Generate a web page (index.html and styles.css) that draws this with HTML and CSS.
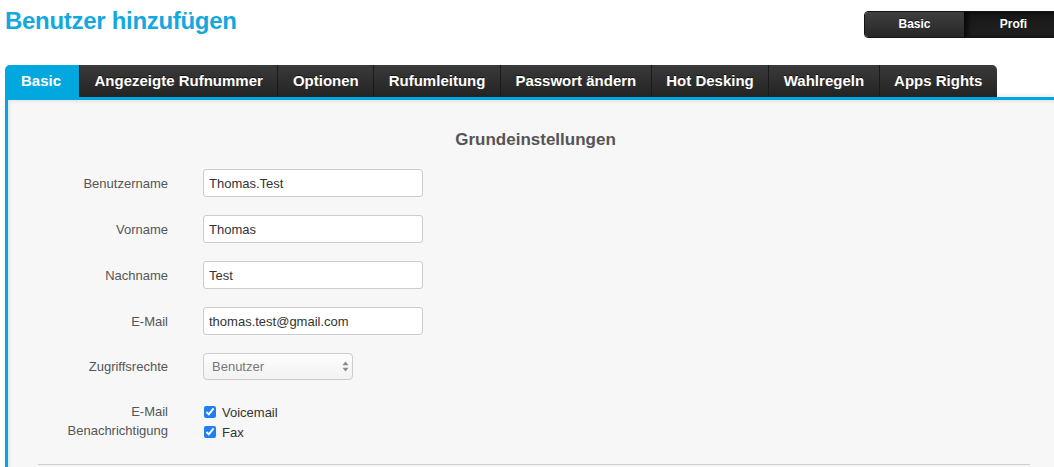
FILE: index.html
```html
<!DOCTYPE html>
<html lang="de">
<head>
<meta charset="utf-8">
<title>Benutzer hinzufügen</title>
<link rel="stylesheet" href="styles.css">
</head>
<body>
<div class="page">
  <header class="top">
    <h1 class="title">Benutzer hinzufügen</h1>
    <div class="mode">
      <span class="mode-btn">Basic</span>
      <span class="mode-btn active">Profi</span>
    </div>
  </header>
  <nav class="tabs">
    <a class="tab active">Basic</a>
    <a class="tab">Angezeigte Rufnummer</a>
    <a class="tab">Optionen</a>
    <a class="tab">Rufumleitung</a>
    <a class="tab">Passwort ändern</a>
    <a class="tab">Hot Desking</a>
    <a class="tab">Wahlregeln</a>
    <a class="tab last">Apps Rights</a>
  </nav>
  <section class="panel">
    <h2 class="panel-title">Grundeinstellungen</h2>
    <div class="form">
      <label class="lbl">Benutzername</label>
      <div class="field"><input class="txt" type="text" value="Thomas.Test"></div>
      <label class="lbl">Vorname</label>
      <div class="field"><input class="txt" type="text" value="Thomas"></div>
      <label class="lbl">Nachname</label>
      <div class="field"><input class="txt" type="text" value="Test"></div>
      <label class="lbl">E-Mail</label>
      <div class="field"><input class="txt" type="text" value="thomas.test@gmail.com"></div>
      <label class="lbl">Zugriffsrechte</label>
      <div class="field">
        <div class="sel-wrap">
          <select class="sel"><option>Benutzer</option></select>
          <svg class="sel-arrows" width="7" height="11" viewBox="0 0 7 11"><path d="M3.5 0.5 L6.5 4.2 L0.5 4.2 Z M3.5 10.5 L6.5 6.8 L0.5 6.8 Z" fill="#8a8a8a"/></svg>
        </div>
      </div>
      <label class="lbl lbl-multi">E-Mail<br>Benachrichtigung</label>
      <div class="field checks">
        <label class="chk"><input type="checkbox" checked> <span>Voicemail</span></label>
        <label class="chk"><input type="checkbox" checked> <span>Fax</span></label>
      </div>
    </div>
    <hr class="sep">
  </section>
</div>
</body>
</html>
```
FILE: styles.css
```css
html, body {
  margin: 0;
  padding: 0;
  background: #ffffff;
  overflow: hidden;
}
body {
  font-family: "Liberation Sans", Arial, Helvetica, sans-serif;
  width: 1054px;
  height: 467px;
}
.page {
  padding-left: 5px;
}
.top {
  display: flex;
  justify-content: space-between;
  align-items: flex-start;
  height: 65px;
}
.title {
  margin: 0;
  padding-top: 7px;
  font-size: 24px;
  line-height: 28px;
  font-weight: bold;
  color: #14a8e0;
  letter-spacing: -0.3px;
}
.mode {
  margin-top: 11px;
  margin-right: -10px;
  display: flex;
  height: 27px;
  border: 1px solid #141414;
  border-radius: 4px;
  overflow: hidden;
  box-sizing: border-box;
}
.mode-btn {
  width: 99px;
  text-align: center;
  font-size: 12px;
  font-weight: bold;
  line-height: 25px;
  color: #ffffff;
  background: linear-gradient(#3f3f3f, #272727);
  text-shadow: 0 -1px 0 rgba(0,0,0,0.5);
}
.mode-btn.active {
  background: linear-gradient(#161616, #222222);
  box-shadow: inset 4px 0 5px rgba(0,0,0,0.7);
}
.tabs {
  display: flex;
  height: 32px;
  position: relative;
  z-index: 1;
}
.tab {
  display: block;
  padding: 0 14.5px;
  font-size: 15px;
  font-weight: bold;
  line-height: 32px;
  color: #ffffff;
  background: linear-gradient(#3a3a3a, #232323);
  border-left: 1px solid #1a1a1a;
  text-shadow: 0 -1px 0 rgba(0,0,0,0.6);
  white-space: nowrap;
}
.tab.active {
  background: #00a8df;
  border-left: 0;
  border-top-left-radius: 5px;
  padding: 0 18px 0 16px;
  text-shadow: none;
}
.tab.last {
  border-top-right-radius: 5px;
}
.panel {
  border-top: 3px solid #00a8df;
  border-left: 3px solid #00a8df;
  background: #f7f7f7;
  box-shadow: inset 2px 2px 3px rgba(0,0,0,0.07), 0 -2px 4px rgba(0,0,0,0.08);
  padding-top: 30px;
  padding-bottom: 40px;
}
.panel-title {
  margin: 0;
  padding-left: 9px;
  text-align: center;
  font-size: 17px;
  line-height: 20px;
  font-weight: bold;
  color: #555555;
}
.form {
  margin-top: 19px;
  display: grid;
  grid-template-columns: 160px 1fr;
  column-gap: 35px;
  row-gap: 18px;
  align-items: center;
}
.lbl {
  text-align: right;
  font-size: 13px;
  color: #555555;
}
.lbl-multi {
  align-self: start;
  line-height: 19px;
  padding-top: 4px;
}
.txt {
  display: block;
  box-sizing: border-box;
  width: 220px;
  height: 28px;
  margin: 0;
  padding: 0 5px;
  border: 1px solid #cccccc;
  border-radius: 3px;
  background: #ffffff;
  font-family: "Liberation Sans", Arial, sans-serif;
  font-size: 13px;
  color: #333333;
  outline: none;
}
.sel-wrap {
  position: relative;
  width: 150px;
}
.sel {
  display: block;
  appearance: none;
  -webkit-appearance: none;
  box-sizing: border-box;
  width: 150px;
  height: 27px;
  margin: 0;
  padding: 0 8px;
  border: 1px solid #cccccc;
  border-radius: 4px;
  background: linear-gradient(#fdfdfd, #f2f2f2);
  font-family: "Liberation Sans", Arial, sans-serif;
  font-size: 13px;
  color: #777777;
}
.sel-arrows {
  position: absolute;
  right: 4px;
  top: 8px;
}
.checks {
  align-self: start;
  padding-top: 4px;
  display: flex;
  flex-direction: column;
}
.chk {
  display: flex;
  align-items: center;
  height: 20px;
  font-size: 13px;
  color: #333333;
}
.chk input {
  width: 12px;
  height: 12px;
  margin: 0 0 0 1px;
  accent-color: #1f7ff2;
}
.chk span {
  margin-left: 6px;
}
.sep {
  margin: 22px 24px 0 30px;
  border: 0;
  border-top: 1px solid #cccccc;
  height: 0;
}
```
